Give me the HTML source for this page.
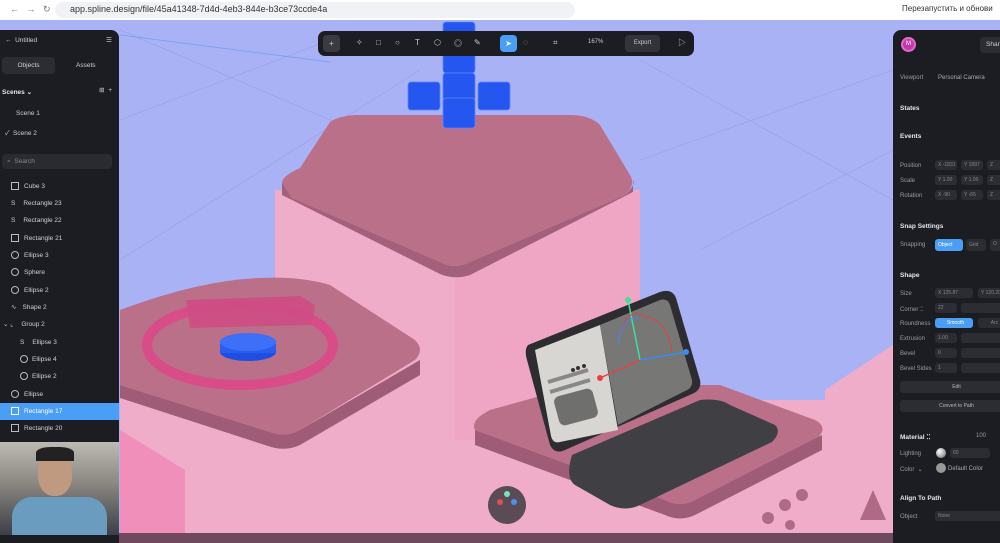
<!DOCTYPE html><html><head><meta charset="utf-8"><style>
*{margin:0;padding:0;box-sizing:border-box}
body{width:1000px;height:543px;overflow:hidden;position:relative;background:#a9b2f5;font-family:"Liberation Sans","Noto Sans CJK JP",sans-serif;}
.bar{position:absolute;left:0;top:0;width:1000px;height:20px;background:#fff;font-size:9px;color:#333}
.panel{position:absolute;background:#1c1d22;color:#cfd0d4;font-size:6.5px;overflow:hidden}
.l{left:0;top:30px;width:119px;height:513px;border-radius:0 8px 0 0}
.r{left:893px;top:30px;width:107px;height:513px;border-radius:8px 0 0 0}
.row{position:absolute;left:0;width:119px;height:17px;line-height:17px}
.ic{position:absolute;width:8px;height:8px;border:1px solid #bbb;top:4px}
.tb{position:absolute;left:318px;top:31px;width:376px;height:25px;background:#1c1d22;border-radius:7px;color:#ccc;font-size:8px}
.tb span{position:absolute;top:7px}
.b{position:absolute;font-weight:bold;color:#e6e6e6;font-size:6.5px;white-space:nowrap}
.lab{position:absolute;color:#9a9ba0;font-size:6px;white-space:nowrap}
.f{position:absolute;background:#2c2d33;border-radius:3px;height:10px;color:#888;font-size:5px;line-height:10px;padding-left:3px;white-space:nowrap;overflow:hidden}
</style></head><body>
<svg width="1000" height="543" style="position:absolute;left:0;top:0">
<g stroke="#8f97d8" stroke-width="0.6" opacity="0.7">
<line x1="120" y1="120" x2="330" y2="40"/><line x1="120" y1="260" x2="420" y2="70"/><line x1="640" y1="60" x2="893" y2="200"/><line x1="640" y1="160" x2="893" y2="70"/><line x1="700" y1="250" x2="893" y2="150"/><line x1="120" y1="30" x2="400" y2="150"/>
</g>
<line x1="120" y1="35" x2="330" y2="62" stroke="#6ea0f0" stroke-width="0.8"/>
<!-- bottom pink fill -->
<path d="M120 400 L893 400 L893 543 L120 543Z" fill="#f0adca"/>
<!-- central block -->
<path d="M275 190 L640 190 L640 440 L275 440Z" fill="#f0adca"/>
<path d="M455 268 L640 190 L640 440 L455 440Z" fill="#eea6c4"/>
<path d="M282 183 Q282 176 300 168 L330 122 Q340 115 360 115 L570 115 Q590 115 600 125 L630 175 Q636 185 625 195 L470 262 Q455 270 440 262 L292 198Z" fill="#bb7089"/>
<path d="M282 183 L292 198 L440 262 Q455 270 470 262 L625 195 Q636 185 633 180 L633 192 L470 275 Q455 280 440 274 L282 195Z" fill="#a2607a"/>
<!-- left block -->
<path d="M120 380 L420 380 L420 543 L120 543Z" fill="#f0adca"/>
<path d="M120 310 Q200 280 260 278 Q300 276 330 285 L415 340 Q425 350 415 360 L300 430 Q285 438 270 432 L120 385Z" fill="#bb7089"/>
<path d="M120 385 L270 432 Q285 438 300 430 L420 360 L420 375 L300 445 Q285 452 268 446 L120 398Z" fill="#9e5c76"/>
<path d="M120 430 L185 470 L185 543 L120 543Z" fill="#f27bb0" opacity="0.6"/>
<!-- ring -->
<ellipse cx="240" cy="345" rx="93" ry="40" fill="none" stroke="#d84c87" stroke-width="10"/>
<path d="M186 300 L300 296 L315 305 L312 325 L190 328Z" fill="#cf4d85" opacity="0.9"/>
<ellipse cx="248" cy="352" rx="28" ry="9" fill="#1f4fe0"/>
<rect x="220" y="343" width="56" height="10" fill="#2a5cf0"/>
<ellipse cx="248" cy="342" rx="28" ry="9" fill="#3d6ff8"/>
<!-- right block -->
<path d="M475 430 Q470 420 490 410 L580 385 L720 385 L815 420 Q830 428 815 440 L695 500 Q680 508 665 500 Z" fill="#bb7089"/>
<path d="M475 430 L665 500 Q680 508 695 500 L822 435 L822 450 L695 515 Q680 522 665 515 L475 445Z" fill="#9e5c76"/>
<path d="M825 390 L893 345 L893 543 L825 543Z" fill="#f0adca"/>
<circle cx="768" cy="518" r="6" fill="#b06a86"/><circle cx="785" cy="505" r="6" fill="#b06a86"/><circle cx="802" cy="495" r="6" fill="#b06a86"/><circle cx="790" cy="525" r="5" fill="#b06a86"/>
<path d="M860 520 L873 490 L886 520Z" fill="#b06a86"/>
<!-- laptop base -->
<path d="M572 455 L700 400 Q720 398 730 405 L775 425 Q782 432 772 442 L640 505 Q625 512 610 505 L575 485 Q565 478 572 455Z" fill="#3f3f44"/>
<!-- screen -->
<path d="M528 345 L660 292 Q672 288 676 298 L700 380 Q702 390 692 394 L565 450 Q555 455 550 445 L527 360 Q524 350 528 345Z" fill="#2d2d31"/>
<path d="M535 350 L600 325 L618 430 L560 442 Q553 444 551 436Z" fill="#d8d6d2"/>
<path d="M600 325 L660 300 Q668 298 670 305 L692 380 Q693 388 685 391 L618 425Z" fill="#777776"/>
<rect x="556" y="392" width="40" height="30" rx="6" fill="#6f6f6e" transform="rotate(-15 576 407)"/>
<line x1="548" y1="382" x2="588" y2="370" stroke="#888" stroke-width="4"/><line x1="550" y1="392" x2="590" y2="380" stroke="#888" stroke-width="4"/>
<circle cx="578" cy="368" r="2" fill="#333"/><circle cx="584" cy="366" r="2" fill="#333"/><circle cx="573" cy="370" r="2" fill="#333"/>
<!-- gizmo -->
<line x1="628" y1="300" x2="640" y2="360" stroke="#3ee0a0" stroke-width="1.5"/>
<path d="M618 345 Q625 305 643 316 Q668 320 672 352" fill="none" stroke="#e04040" stroke-width="1"/>
<path d="M618 345 Q622 315 640 318" fill="none" stroke="#3090f0" stroke-width="1"/>
<line x1="600" y1="378" x2="640" y2="360" stroke="#e84040" stroke-width="1.5"/>
<line x1="640" y1="360" x2="686" y2="352" stroke="#3a8cf0" stroke-width="1.5"/>
<circle cx="600" cy="378" r="3" fill="#e84040"/><circle cx="628" cy="300" r="3" fill="#3ee0a0"/><circle cx="686" cy="352" r="3" fill="#3a8cf0"/>
<!-- blue cubes -->
<g fill="#2556f0" stroke="#5d86ff" stroke-width="0.8">
<rect x="443" y="22" width="32" height="22" rx="3"/><rect x="443" y="45" width="32" height="28" rx="3"/><rect x="443" y="73" width="32" height="28" rx="3"/>
<rect x="408" y="82" width="32" height="28" rx="3"/><rect x="478" y="82" width="32" height="28" rx="3"/><rect x="443" y="98" width="32" height="30" rx="3"/>
</g>
<circle cx="507" cy="505" r="19" fill="#5a4b55"/>
<circle cx="507" cy="494" r="3" fill="#7de0c0"/><circle cx="500" cy="502" r="3" fill="#e05050"/><circle cx="514" cy="502" r="3" fill="#4a90f0"/>
<rect x="0" y="533" width="1000" height="10" fill="#6f4a5e"/>
</svg>
<div class="bar"><span style="position:absolute;left:10px;top:4px;color:#777">← &nbsp; → &nbsp; ↻</span>
<div style="position:absolute;left:55px;top:2px;width:520px;height:16px;background:#f0f2f5;border-radius:8px"></div>
<span style="position:absolute;left:70px;top:4px">app.spline.design/file/45a41348-7d4d-4eb3-844e-b3ce73ccde4a</span>
<span style="position:absolute;left:902px;top:4px;font-size:8px">Перезапустить и обнови</span></div>
<div class="panel l">
<div style="position:absolute;left:5px;top:7px">← &nbsp;Untitled</div><div style="position:absolute;right:7px;top:6px">☰</div>
<div style="position:absolute;left:2px;top:27px;width:53px;height:17px;background:#2c2d33;border-radius:4px;text-align:center;line-height:17px">Objects</div>
<div style="position:absolute;left:76px;top:32px">Assets</div>
<div class="b" style="left:2px;top:58px">Scenes ⌄</div><div style="position:absolute;right:7px;top:56px">⊞ &nbsp;+</div>
<div style="position:absolute;left:16px;top:80px">Scene 1</div><div style="position:absolute;left:5px;top:97px">✓ &nbsp;Scene 2</div>
<div style="position:absolute;left:2px;top:124px;width:110px;height:15px;background:#2a2b30;border-radius:4px;line-height:15px;padding-left:5px;color:#888">⌕ &nbsp;Search</div>
<div class="row" style="top:148px"><span class="ic" style="left:11px"></span><span style="margin-left:24px">Cube 3</span></div>
<div class="row" style="top:165px"><span style="margin-left:11px">S</span><span style="margin-left:8px">Rectangle 23</span></div>
<div class="row" style="top:182px"><span style="margin-left:11px">S</span><span style="margin-left:8px">Rectangle 22</span></div>
<div class="row" style="top:200px"><span class="ic" style="left:11px"></span><span style="margin-left:24px">Rectangle 21</span></div>
<div class="row" style="top:217px"><span class="ic" style="left:11px;border-radius:50%"></span><span style="margin-left:24px">Ellipse 3</span></div>
<div class="row" style="top:234px"><span class="ic" style="left:11px;border-radius:50%"></span><span style="margin-left:24px">Sphere</span></div>
<div class="row" style="top:252px"><span class="ic" style="left:11px;border-radius:50%"></span><span style="margin-left:24px">Ellipse 2</span></div>
<div class="row" style="top:269px"><span style="margin-left:11px">∿</span><span style="margin-left:6px">Shape 2</span></div>
<div class="row" style="top:286px"><span style="margin-left:3px">⌄ ⌞</span><span style="margin-left:8px">Group 2</span></div>
<div class="row" style="top:304px"><span style="margin-left:20px">S</span><span style="margin-left:8px">Ellipse 3</span></div>
<div class="row" style="top:321px"><span class="ic" style="left:20px;border-radius:50%"></span><span style="margin-left:32px">Ellipse 4</span></div>
<div class="row" style="top:338px"><span class="ic" style="left:20px;border-radius:50%"></span><span style="margin-left:32px">Ellipse 2</span></div>
<div class="row" style="top:356px"><span class="ic" style="left:11px;border-radius:50%"></span><span style="margin-left:24px">Ellipse</span></div>
<div class="row" style="top:373px;background:#4a9ef5;color:#fff"><span class="ic" style="left:11px;border-color:#fff"></span><span style="margin-left:24px">Rectangle 17</span></div>
<div class="row" style="top:390px"><span class="ic" style="left:11px"></span><span style="margin-left:24px">Rectangle 20</span></div>
<div style="position:absolute;left:0;top:412px;width:119px;height:93px;background:linear-gradient(180deg,#bdbab3 0%,#8a8680 45%,#3c3f47 100%)">
<div style="position:absolute;left:38px;top:10px;width:34px;height:44px;background:#c09a80;border-radius:45%"></div>
<div style="position:absolute;left:36px;top:5px;width:38px;height:14px;background:#222;border-radius:40% 40% 0 0"></div>
<div style="position:absolute;left:12px;top:55px;width:95px;height:38px;background:#6a9cc0;border-radius:20px 20px 0 0"></div>
</div>
</div>
<div class="tb">
<div style="position:absolute;left:5px;top:4px;width:17px;height:17px;background:#3a3b41;border-radius:4px;text-align:center;line-height:17px">+</div>
<span style="left:38px">✧</span><span style="left:58px">□</span><span style="left:77px">○</span><span style="left:97px">T</span><span style="left:116px">⬡</span><span style="left:136px">◎</span><span style="left:156px">✎</span>
<div style="position:absolute;left:182px;top:4px;width:17px;height:17px;background:#4a9ef5;border-radius:4px;text-align:center;line-height:17px;color:#fff">➤</div>
<span style="left:205px">◌</span><span style="left:235px">⌗</span>
<span style="left:270px;top:8px;font-size:6px">167%</span>
<div style="position:absolute;left:307px;top:4px;width:35px;height:17px;background:#333439;border-radius:4px;text-align:center;line-height:17px;font-size:6px">Export</div>
<span style="left:360px;top:6px">▷</span>
</div>
<div class="panel r">
<div style="position:absolute;left:8px;top:7px;width:15px;height:15px;border-radius:50%;background:#c03aa8;border:2px solid #e56ad0;color:#fff;font-size:6px;text-align:center;line-height:11px">M</div>
<div style="position:absolute;left:87px;top:7px;width:30px;height:16px;background:#2c2d33;border-radius:4px;line-height:16px;padding-left:6px">Share</div>
<div class="lab" style="left:7px;top:45px">Viewport</div><div class="lab" style="left:45px;top:45px;color:#aaa">Personal Camera</div>
<div class="b" style="left:7px;top:75px">States</div><div class="b" style="left:7px;top:103px">Events</div>
<div class="lab" style="left:7px;top:133px">Position</div><div class="f" style="left:42px;top:130px;width:22px">X -1831</div><div class="f" style="left:68px;top:130px;width:22px">Y 1897</div><div class="f" style="left:94px;top:130px;width:20px">Z</div>
<div class="lab" style="left:7px;top:148px">Scale</div><div class="f" style="left:42px;top:145px;width:22px">Y 1.00</div><div class="f" style="left:68px;top:145px;width:22px">Y 1.00</div><div class="f" style="left:94px;top:145px;width:20px">Z</div>
<div class="lab" style="left:7px;top:163px">Rotation</div><div class="f" style="left:42px;top:160px;width:22px">X -90</div><div class="f" style="left:68px;top:160px;width:22px">Y -65</div><div class="f" style="left:94px;top:160px;width:20px">Z</div>
<div class="b" style="left:7px;top:193px">Snap Settings</div>
<div class="lab" style="left:7px;top:212px">Snapping</div><div class="f" style="left:42px;top:209px;width:28px;height:12px;background:#4a9ef5;color:#fff;line-height:12px">Object</div><div class="f" style="left:73px;top:209px;width:20px;height:12px;line-height:12px">Grid</div><div class="f" style="left:97px;top:209px;width:15px;height:12px">O</div>
<div class="b" style="left:7px;top:242px">Shape</div>
<div class="lab" style="left:7px;top:261px">Size</div><div class="f" style="left:42px;top:258px;width:38px">X 125.87</div><div class="f" style="left:85px;top:258px;width:30px">Y 120.20</div>
<div class="lab" style="left:7px;top:276px">Corner ⁚⁚</div><div class="f" style="left:42px;top:273px;width:22px">22</div><div class="f" style="left:68px;top:273px;width:45px"></div>
<div class="lab" style="left:7px;top:291px">Roundness</div><div class="f" style="left:42px;top:288px;width:38px;background:#4a9ef5;color:#fff;text-align:center">Smooth</div><div class="f" style="left:85px;top:288px;width:30px;text-align:center">Arc</div>
<div class="lab" style="left:7px;top:306px">Extrusion</div><div class="f" style="left:42px;top:303px;width:22px">1.00</div><div class="f" style="left:68px;top:303px;width:45px"></div>
<div class="lab" style="left:7px;top:321px">Bevel</div><div class="f" style="left:42px;top:318px;width:22px">0</div><div class="f" style="left:68px;top:318px;width:45px"></div>
<div class="lab" style="left:7px;top:336px">Bevel Sides</div><div class="f" style="left:42px;top:333px;width:22px">1</div><div class="f" style="left:68px;top:333px;width:45px"></div>
<div class="f" style="left:7px;top:351px;width:110px;height:12px;text-align:center;line-height:12px;color:#bbb">Edit</div>
<div class="f" style="left:7px;top:370px;width:110px;height:12px;text-align:center;line-height:12px;color:#bbb">Convert to Path</div>
<div class="b" style="left:7px;top:403px">Material ⁚⁚</div><div class="lab" style="left:83px;top:403px">100</div>
<div class="lab" style="left:7px;top:421px">Lighting</div><div style="position:absolute;left:43px;top:418px;width:10px;height:10px;border-radius:50%;background:radial-gradient(circle at 35% 35%,#fff,#666)"></div><div class="f" style="left:57px;top:418px;width:40px">60</div>
<div class="lab" style="left:7px;top:436px">Color &nbsp;⌄</div><div style="position:absolute;left:43px;top:433px;width:10px;height:10px;border-radius:50%;background:#999"></div><div class="lab" style="left:55px;top:436px;color:#aaa">Default Color</div>
<div class="b" style="left:7px;top:465px">Align To Path</div>
<div class="lab" style="left:7px;top:484px">Object</div><div class="f" style="left:42px;top:481px;width:70px">None</div>
</div>
</body></html>
